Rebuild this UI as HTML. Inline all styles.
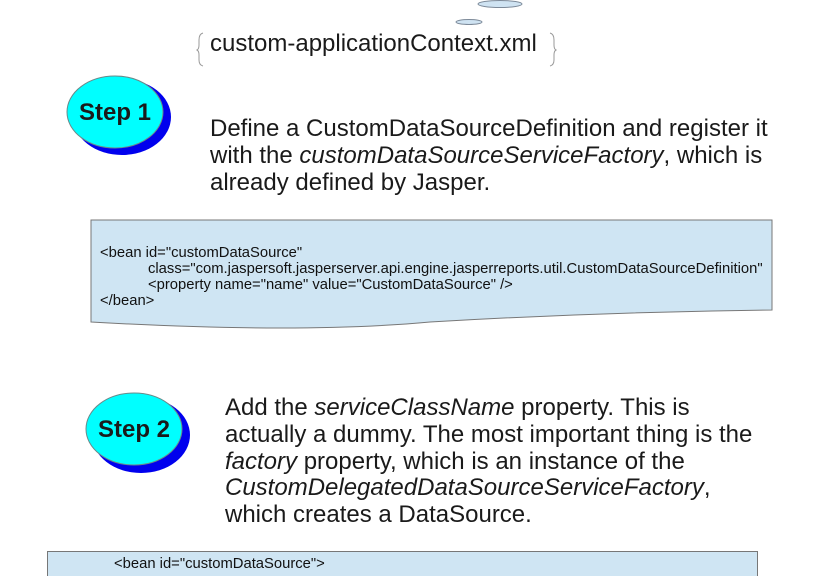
<!DOCTYPE html>
<html><head><style>
body{margin:0;width:816px;height:576px;background:#fff;position:relative;overflow:hidden;font-family:"Liberation Sans",sans-serif;color:#1a1a1a}
.t{position:absolute;white-space:nowrap}
.big{font-size:24px;line-height:26.8px}
.code{font-size:14.8px;line-height:16px;color:#111}
</style></head><body>
<svg width="816" height="576" style="position:absolute;left:0;top:0">
<ellipse cx="500" cy="4" rx="22" ry="3.5" fill="#cfe3f2" stroke="#7d8a99" stroke-width="1"/>
<ellipse cx="469" cy="22" rx="13" ry="2.5" fill="#cfe3f2" stroke="#7d8a99" stroke-width="1"/>
<path d="M203 33 Q199 34 199 40 L199 45 Q199 49 197 50 Q199 51 199 55 L199 60 Q199 65 203 66" fill="none" stroke="#999" stroke-width="1"/>
<path d="M550 33 Q554 34 554 40 L554 45 Q554 49 556 50 Q554 51 554 55 L554 60 Q554 65 550 66" fill="none" stroke="#999" stroke-width="1"/>
<ellipse cx="122" cy="117" rx="49" ry="38" fill="#0000ee"/>
<ellipse cx="115" cy="112" rx="48" ry="36" fill="#00ffff" stroke="#6a8a8a" stroke-width="1"/>
<ellipse cx="141" cy="435" rx="49" ry="38" fill="#0000ee"/>
<ellipse cx="134" cy="429" rx="48" ry="36" fill="#00ffff" stroke="#6a8a8a" stroke-width="1"/>
<path d="M91 220 L772 220 L772 310 Q600 312 430 322 Q300 334 91 322 Z" fill="#cfe5f3" stroke="#777" stroke-width="1"/>
<rect x="47.5" y="551.5" width="710" height="40" fill="#cfe5f3" stroke="#777" stroke-width="1"/>
</svg>
<div class="t" style="left:210px;top:30px;font-size:24px">custom-applicationContext.xml</div>
<div class="t" style="left:79px;top:99px;font-size:24px;font-weight:bold">Step 1</div>
<div class="t" style="left:98px;top:416px;font-size:24px;font-weight:bold">Step 2</div>
<div class="t big" style="left:210px;top:116px">Define a CustomDataSourceDefinition and register it<br>with the <i>customDataSourceServiceFactory</i>, which is<br>already defined by Jasper.</div>
<div class="t code" style="left:100px;top:245px">&lt;bean id="customDataSource"<br><span style="padding-left:48px">class="com.jaspersoft.jasperserver.api.engine.jasperreports.util.CustomDataSourceDefinition"</span><br><span style="padding-left:48px">&lt;property name="name" value="CustomDataSource" /&gt;</span><br>&lt;/bean&gt;</div>
<div class="t big" style="left:225px;top:395px">Add the <i>serviceClassName</i> property. This is<br>actually a dummy. The most important thing is the<br><i>factory</i> property, which is an instance of the<br><i>CustomDelegatedDataSourceServiceFactory</i>,<br>which creates a DataSource.</div>
<div class="t code" style="left:114px;top:556px">&lt;bean id="customDataSource"&gt;</div>
</body></html>
